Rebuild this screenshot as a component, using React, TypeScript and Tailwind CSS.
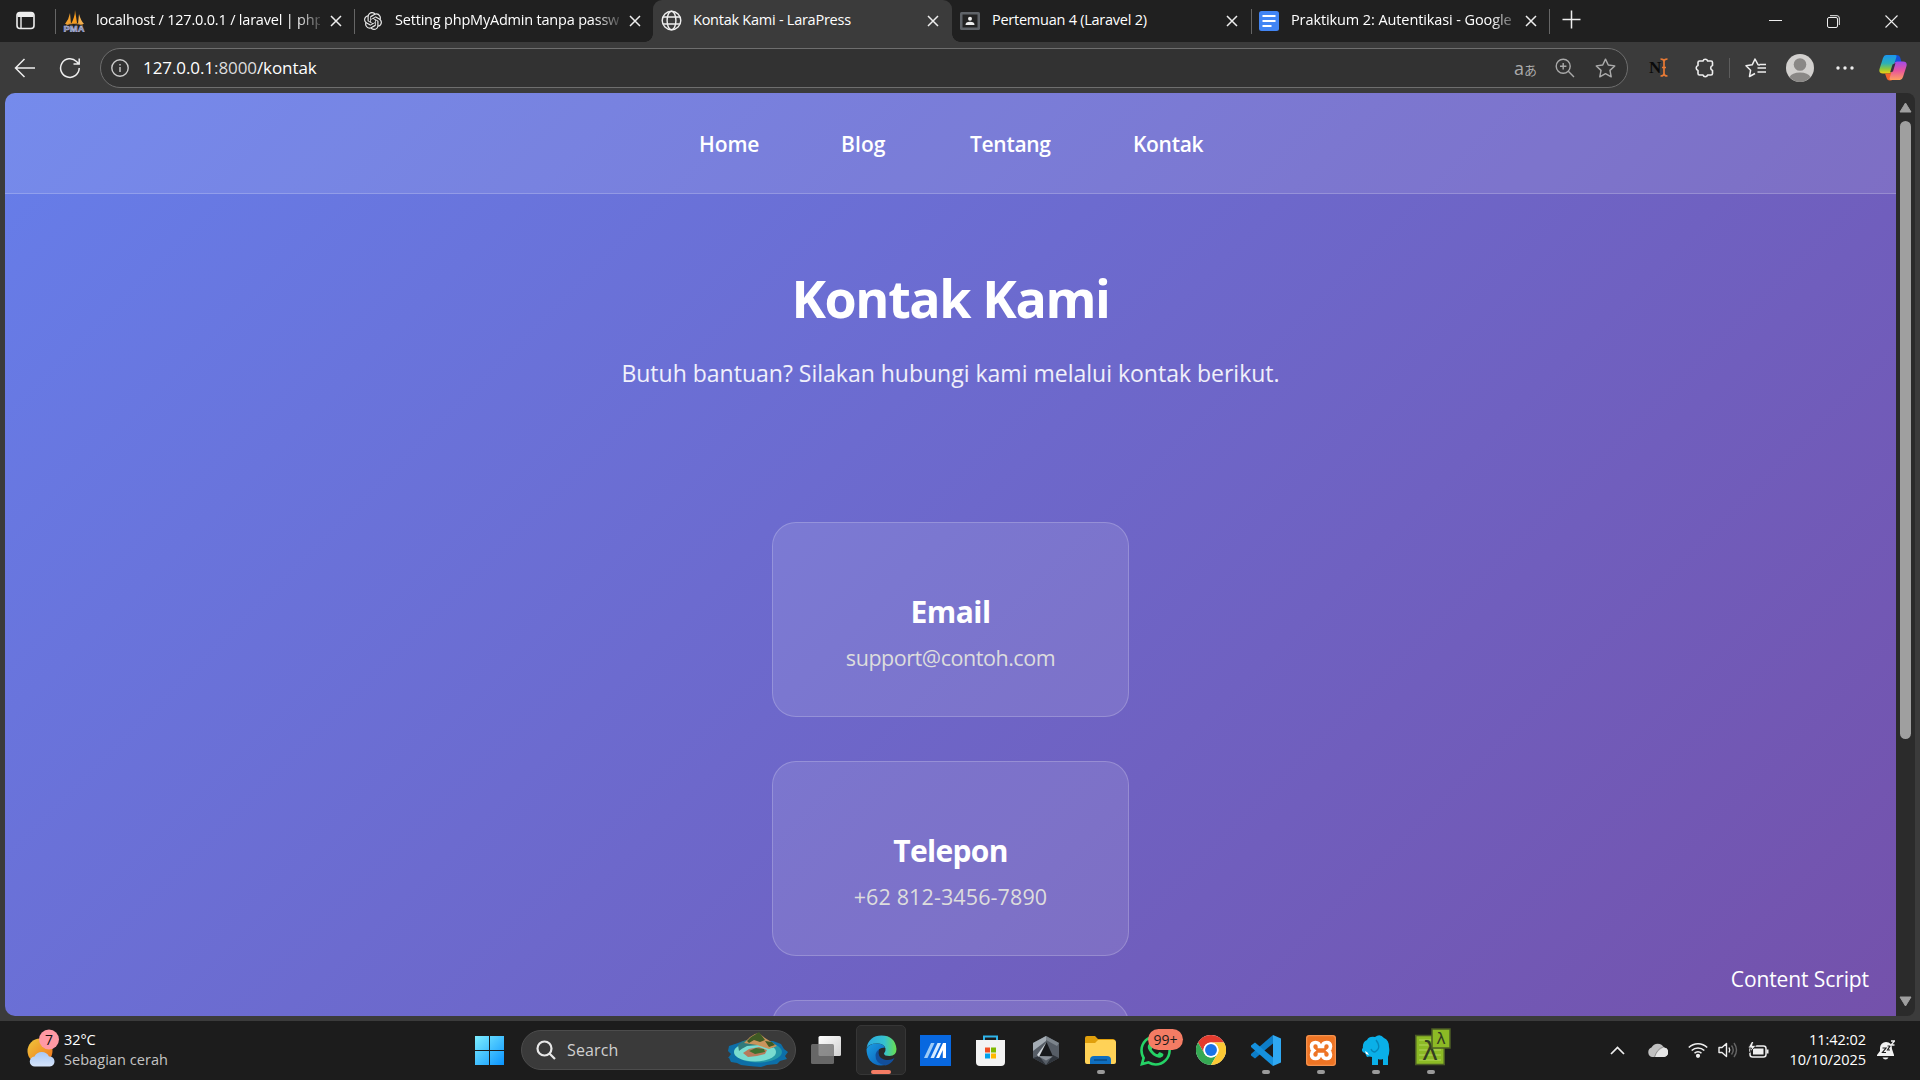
import React from "react";

const SANS = "font-['Open_Sans',sans-serif]";

function Close() {
  return (
    <svg width="12" height="12" viewBox="0 0 12 12" stroke="#eee" strokeWidth="1.5" fill="none" className="shrink-0">
      <path d="M1 1l10 10M11 1L1 11" />
    </svg>
  );
}

function Tab({ icon, text, fade = "", ls, active = false, sep = false, pad = "pl-[7px]", gap = "ml-[11px]" }: { icon: React.ReactNode; text: string; fade?: string; ls: string; active?: boolean; sep?: boolean; pad?: string; gap?: string }) {
  return (
    <div className={`relative flex h-full w-[299px] shrink-0 items-center ${pad} ${active ? "rounded-t-[9px] bg-[#3b3b3b]" : ""}`}>
      {sep && <div className="absolute left-0 top-[9px] h-[25px] w-px bg-[#666]" />}
      <div className="-mt-px flex w-[22px] shrink-0 justify-center">{icon}</div>
      <div className={`${gap} -mt-[2px] w-[224px] shrink-0 whitespace-nowrap text-[14.5px] leading-[22px] text-white ${ls} ${fade}`}>{text}</div>
      <div className="ml-[10px] flex"><Close /></div>
      {active && (
        <>
          <div className="absolute -left-[8px] bottom-0 size-[8px] bg-[radial-gradient(circle_at_0_0,#202020_7.5px,#3b3b3b_8px)]" />
          <div className="absolute -right-[8px] bottom-0 size-[8px] bg-[radial-gradient(circle_at_100%_0,#202020_7.5px,#3b3b3b_8px)]" />
        </>
      )}
    </div>
  );
}

const FADE = "[mask-image:linear-gradient(to_right,#000_200px,transparent_230px)]";

function TabBar() {
  return (
    <div className="flex h-[42px] bg-[#202020]">
      <div className="flex w-[55px] shrink-0 items-center pl-[16px]">
        <svg width="19" height="19" viewBox="0 0 19 19" fill="none" stroke="#eee" strokeWidth="1.6" className="-mt-[2px]">
          <rect x="1" y="1.5" width="17" height="16" rx="3" />
          <path d="M1.5 4h16" strokeWidth="4" />
          <path d="M5 5v12" strokeWidth="1.4" />
        </svg>
      </div>
      <Tab sep pad="pl-[8px]" text="localhost / 127.0.0.1 / laravel | php" fade={FADE} ls="tracking-[-0.2px]" icon={
        <svg width="22" height="22" viewBox="0 0 22 22">
          <path d="M2 14Q6 9 7 3L8 14z" fill="#f0a030" /><path d="M8 14Q12 7 12 0L14 13z" fill="#f89c1d" /><path d="M15 14L16 4Q18 11 21 14z" fill="#f3af4e" /><path d="M3 15Q10 12 20 15" stroke="#c9862d" fill="none" />
          <text x="0.5" y="21.5" fontSize="9" fontWeight="bold" fontFamily="Liberation Sans" fill="#5d68a4" stroke="#c6cae4" strokeWidth=".5" textLength="21" lengthAdjust="spacingAndGlyphs">PMA</text>
        </svg>} />
      <Tab sep pad="pl-[8px]" text="Setting phpMyAdmin tanpa passw" fade={FADE} ls="tracking-[-0.2px]" icon={
        <svg width="18" height="18" viewBox="0 0 24 24" fill="#e8e8e8"><path d="M22.28 9.82a5.98 5.98 0 0 0-.52-4.91 6.05 6.05 0 0 0-6.51-2.9A6.07 6.07 0 0 0 4.98 4.18a5.98 5.98 0 0 0-4 2.9 6.05 6.05 0 0 0 .74 7.1 5.98 5.98 0 0 0 .51 4.91 6.05 6.05 0 0 0 6.52 2.9A5.98 5.98 0 0 0 13.26 24a6.06 6.06 0 0 0 5.77-4.21 5.99 5.99 0 0 0 4-2.9 6.06 6.06 0 0 0-.75-7.07zm-9.02 12.61a4.48 4.48 0 0 1-2.88-1.04l.14-.08 4.78-2.76a.8.8 0 0 0 .39-.68v-6.74l2.02 1.17a.07.07 0 0 1 .04.05v5.58a4.5 4.5 0 0 1-4.49 4.5zM3.6 18.3a4.47 4.47 0 0 1-.54-3.01l.14.09 4.78 2.76a.77.77 0 0 0 .78 0l5.84-3.37v2.33a.08.08 0 0 1-.03.06L9.74 19.95a4.5 4.5 0 0 1-6.14-1.65zM2.34 7.9a4.49 4.49 0 0 1 2.37-1.98v5.68a.77.77 0 0 0 .39.68l5.81 3.35-2.02 1.17a.08.08 0 0 1-.07 0L3.99 14A4.5 4.5 0 0 1 2.34 7.87zm16.6 3.86L13.1 8.36 15.12 7.2a.08.08 0 0 1 .07 0l4.83 2.79a4.49 4.49 0 0 1-.68 8.1v-5.67a.79.79 0 0 0-.4-.67zm2.01-3.02l-.14-.09-4.77-2.78a.78.78 0 0 0-.79 0L9.41 9.23V6.9a.07.07 0 0 1 .03-.06l4.83-2.79a4.5 4.5 0 0 1 6.68 4.66zM8.31 12.86l-2.02-1.16a.08.08 0 0 1-.04-.06V6.07a4.5 4.5 0 0 1 7.38-3.45l-.14.08L8.7 5.46a.8.8 0 0 0-.39.68zm1.1-2.37L12 9l2.6 1.5v3L12 15l-2.6-1.5z" /></svg>} />
      <Tab active text="Kontak Kami - LaraPress" ls="tracking-[-0.25px]" icon={
        <svg width="21" height="21" viewBox="0 0 21 21" fill="none" stroke="#eee" strokeWidth="1.4"><circle cx="10.5" cy="10.5" r="9.3" /><ellipse cx="10.5" cy="10.5" rx="4.4" ry="9.3" /><path d="M2 7h17M2 14h17" /></svg>} />
      <Tab text="Pertemuan 4 (Laravel 2)" ls="tracking-[-0.25px]" icon={
        <svg width="20" height="18" viewBox="0 0 20 18"><rect width="20" height="18" rx="1.5" fill="#5f6368" /><rect x="2.5" y="2.5" width="15" height="13" fill="#222" /><circle cx="10" cy="6.8" r="2" fill="#eee" /><path d="M5.5 13q0-3.2 4.5-3.2t4.5 3.2z" fill="#eee" /></svg>} />
      <Tab sep text="Praktikum 2: Autentikasi - Google" fade={FADE} ls="tracking-[-0.1px]" icon={
        <svg width="20" height="20" viewBox="0 0 20 20"><rect width="20" height="20" rx="2.5" fill="#4285f4" /><path d="M3.5 5h13M3.5 10h13M3.5 15h9" stroke="#fff" strokeWidth="2" /></svg>} />
      <div className="relative flex grow items-center">
        <div className="absolute -left-px top-[9px] h-[25px] w-px bg-[#666]" />
        <svg className="-mt-[3px] ml-[12px]" width="19" height="19" viewBox="0 0 19 19" stroke="#eee" strokeWidth="1.5"><path d="M9.5 0.5v18M.5 9.5h18" /></svg>
      </div>
      <div className="flex items-center pr-[22px]">
        <svg width="13" height="13" viewBox="0 0 13 13" stroke="#eee" className="mr-[45px]"><path d="M0 5.5h13" /></svg>
        <svg width="13" height="13" viewBox="0 0 13 13" stroke="#eee" fill="none" className="mr-[45px]"><rect x=".5" y="2.5" width="10" height="10" rx="1.5" /><path d="M3 .7h7q2.3 0 2.3 2.3v7" /></svg>
        <svg width="13" height="13" viewBox="0 0 13 13" stroke="#eee" strokeWidth="1.1"><path d="M.5 .5l12 12M12.500 .5l-12 12" /></svg>
      </div>
    </div>
  );
}

function Toolbar() {
  return (
    <div className="flex h-[51px] items-center bg-[#3b3b3b]">
      <svg className="ml-[14px]" width="22" height="20" viewBox="0 0 22 20" fill="none" stroke="#eee" strokeWidth="1.5"><path d="M21 10H1.500M10.500 1L1.500 10l9 9" /></svg>
      <svg className="ml-[23px]" width="22" height="22" viewBox="0 0 22 22" fill="none" stroke="#eee" strokeWidth="1.5"><path d="M20.200 11a9.300 9.300 0 1 1-2.700-6.500L20 7M20.200 1.500V7H14.500" /></svg>
      <div className="ml-[19px] flex h-[40px] w-[1528px] items-center rounded-full border border-[#6e6e6e] bg-[#323232] pl-[10px]">
        <svg width="18" height="18" viewBox="0 0 18 18" fill="none" stroke="#ccc" strokeWidth="1.4"><circle cx="9" cy="9" r="8.200" /><path d="M9 8v5M9 5v1.600" /></svg>
        <div className="ml-[14px] grow text-[17px] leading-[24px] tracking-[-0.080px] text-[#ddd]"><span className="text-white">127.0.0.1</span>:8000<span className="text-white">/kontak</span></div>
        <div className="flex w-[22px] items-baseline whitespace-nowrap text-[18px] leading-[24px] text-[#aaa]">a<span className="font-['Noto_Sans_CJK_JP',sans-serif] text-[13px] leading-[20px]">あ</span></div>
        <svg className="ml-[19px]" width="20" height="20" viewBox="0 0 20 20" fill="none" stroke="#aaa" strokeWidth="1.400"><circle cx="8.200" cy="8.200" r="7" /><path d="M13.300 13.300l5.700 5.700M8.200 5v6.400M5 8.200h6.400" /></svg>
        <svg className="ml-[20px] mr-[11px]" width="21" height="20" viewBox="0 0 22 21" fill="none" stroke="#aaa" strokeWidth="1.500" strokeLinejoin="round"><path d="M11 1.200l2.900 6.200 6.800.900-5 4.700 1.300 6.800-6-3.400-6 3.400 1.300-6.800-5-4.700 6.800-.900z" /></svg>
      </div>
      <div className="ml-[21px] flex items-center font-['Liberation_Serif',serif] text-[17px] font-bold text-[#0a0a0a]">N
        <svg width="8" height="19" viewBox="0 0 8 19" fill="none" stroke="#e87a35" strokeWidth="1.700" className="-ml-px"><path d="M.5 1q3.500 0 3.500 2.500v12q0 2.500-3.500 2.500M7.500 1Q4 1 4 3.500M4 15.500Q4 18 7.500 18M2 9.500h4" /></svg>
      </div>
      <svg className="ml-[26px]" width="21" height="22" viewBox="0 0 21 22" fill="none" stroke="#eee" strokeWidth="1.600" strokeLinejoin="round"><path d="M5.500 4H9a2.400 2.400 0 0 1 4.600 0H17q1.500 0 1.500 1.500V8.600a2.500 2.500 0 0 0 0 4.800v3.100q0 1.500-1.500 1.500h-3.400a2.400 2.400 0 0 1-4.600 0H5.500Q4 18 4 16.500v-3.100a2.500 2.500 0 0 1 0-4.800V5.500Q4 4 5.500 4z" /></svg>
      <div className="ml-[14px] h-[20px] w-px bg-[#5d5d5d]" />
      <svg className="ml-[15px]" width="22" height="20" viewBox="0 0 22 20" fill="none" stroke="#eee" strokeWidth="1.500" strokeLinejoin="round"><path d="M15 6.900L13 6.700 10 1 7.200 6.800 1 7.700l4.600 4.500L4.500 18.500 10 15.500M12.500 10h8.500M12.500 14h8.500M14.500 6.500h6.500" /></svg>
      <svg className="ml-[19px]" width="28" height="28" viewBox="0 0 28 28"><circle cx="14" cy="14" r="14" fill="#d2d0ce" /><circle cx="14" cy="10.500" r="6.300" fill="#8a8886" /><path d="M3.500 23Q6 18.500 14 18.500T24.500 23Q20 28 14 28T3.500 23z" fill="#8a8886" /></svg>
      <svg className="ml-[22px]" width="18" height="4" viewBox="0 0 18 4" fill="#eee"><circle cx="2" cy="2" r="1.700" /><circle cx="9" cy="2" r="1.700" /><circle cx="16" cy="2" r="1.700" /></svg>
      <Copilot />
    </div>
  );
}

function Copilot() {
  return (
    <svg className="ml-[25px]" width="28" height="27" viewBox="0 0 28 27">
      <defs>
        <linearGradient id="c1" x1="0" y1="0" x2="0" y2="1"><stop offset="0" stopColor="#1a95f0" /><stop offset=".45" stopColor="#2bb0b8" /><stop offset=".75" stopColor="#8cc83c" /><stop offset="1" stopColor="#f5d010" /></linearGradient>
        <linearGradient id="c2" x1="0" y1="0" x2="0" y2="1"><stop offset="0" stopColor="#a04bea" /><stop offset=".5" stopColor="#e8559c" /><stop offset="1" stopColor="#ffa060" /></linearGradient>
      </defs>
      <path d="M14 1h4q2.500 0 3.200 2.500L22.500 8H18q-2 0-2.500 2z" fill="#1450d8" />
      <path d="M7 1h9q2 0 1.400 2L13 17q-.8 2.500-3 2.500H4Q-.5 19.500.5 15L4 4Q5 1 7 1z" fill="url(#c1)" />
      <path d="M6 19.500h4q2.200 0 3-2.500l.5-1L15 20l-2.500 6.500h-2q-2 0-2.700-2z" fill="#f4632c" />
      <path d="M21 26h-9q-2 0-1.400-2L15 10q.8-2.500 3-2.500h6q4.500 0 3.500 4.500l-3.500 11Q23 26 21 26z" fill="url(#c2)" />
      <path d="M13.500 10.500l3-1.500-2.500 8.500-3 1z" fill="#35303c" />
    </svg>
  );
}

function Card({ title, text, ts, xs }: { title: string; text: string; ts: string; xs: string }) {
  return (
    <div className="flex h-[195px] w-[357px] shrink-0 flex-col items-center rounded-[24px] border border-white/20 bg-white/10 pt-[65px]">
      <h3 className={`text-[30px] font-bold leading-[48px] text-white ${ts}`}>{title}</h3>
      <p className={`mt-[4px] text-[21.5px] leading-[36px] text-[#dddddd] ${xs}`}>{text}</p>
    </div>
  );
}

function Page() {
  return (
    <div className="relative flex h-[923px] w-[1891px] flex-col overflow-hidden rounded-bl-[10px] rounded-tl-[10px] bg-[linear-gradient(135deg,#667eea_0%,#764ba2_100%)] bg-[length:1891px_1310px] bg-no-repeat">
      <nav className="flex h-[101px] shrink-0 border-b border-white/20 bg-white/10 pl-[694px] pt-[35px] text-[21px] font-semibold leading-[32px] text-white">
        <span className="w-[142px] tracking-[-0.1px]">Home</span>
        <span className="w-[129px] tracking-[0.1px]">Blog</span>
        <span className="w-[163px] tracking-[-0.3px]">Tentang</span>
        <span className="tracking-[-0.3px]">Kontak</span>
      </nav>
      <header className="flex shrink-0 flex-col items-center pt-[64px] text-white">
        <h1 className="text-[52px] font-bold leading-[80px] tracking-[-1.4px]">Kontak Kami</h1>
        <p className="mt-[16px] text-[23px] leading-[38px] text-white/90">Butuh bantuan? Silakan hubungi kami melalui kontak berikut.</p>
      </header>
      <section className="mt-[130px] flex flex-col items-center gap-[44px]">
        <Card title="Email" text="support@contoh.com" ts="tracking-[-0.5px]" xs="tracking-[-0.45px]" />
        <Card title="Telepon" text="+62 812-3456-7890" ts="tracking-[-0.7px]" xs="tracking-[0.12px]" />
        <Card title="Alamat" text="Jakarta, Indonesia" ts="" xs="" />
      </section>
      <div className="absolute right-[27px] top-[870px] text-[21px] leading-[32px] tracking-[-0.1px] text-white">Content Script</div>
    </div>
  );
}

function Scrollbar() {
  return (
    <div className="flex h-[923px] w-[19px] flex-col items-center rounded-r-[8px] bg-[#2b2b2b]">
      <svg className="mt-[9px] shrink-0" width="13" height="11" viewBox="0 0 13 11" fill="#9f9f9f"><path d="M6.500 1L12 10H1z" stroke="#9f9f9f" strokeLinejoin="round" /></svg>
      <div className="mt-[8px] h-[618px] w-[11px] shrink-0 rounded-full bg-[#9f9f9f]" />
      <svg className="mb-[9px] mt-auto shrink-0" width="13" height="11" viewBox="0 0 13 11" fill="#9f9f9f"><path d="M1 1h11L6.500 10z" stroke="#9f9f9f" strokeLinejoin="round" /></svg>
    </div>
  );
}

function Slot({ children, dot = false }: { children: React.ReactNode; dot?: boolean }) {
  return (
    <div className="relative flex h-[50px] w-[55px] shrink-0 items-center justify-center">
      {children}
      {dot && <div className="absolute bottom-[1px] h-[4px] w-[8px] rounded-full bg-[#9a9a9a]" />}
    </div>
  );
}

function Taskbar() {
  return (
    <div className="flex h-[59px] items-center bg-[#1c1c1c] pb-px">
      <div className="flex w-[475px] shrink-0 items-center pl-[26px]">
        <svg width="34" height="38" viewBox="0 0 34 38" className="-mt-[4px]">
          <defs><linearGradient id="sun" x1="0" y1="0" x2="1" y2="1"><stop offset="0" stopColor="#f0c83c" /><stop offset="1" stopColor="#f0701a" /></linearGradient><linearGradient id="cl" x1="0" y1="0" x2="0" y2="1"><stop offset="0" stopColor="#a9c8f5" /><stop offset="1" stopColor="#d5e4fa" /></linearGradient></defs>
          <circle cx="14" cy="22" r="12.500" fill="url(#sun)" />
          <path d="M9 37.500a5 5 0 0 1-.5-10 8 8 0 0 1 14.500 0 5 5 0 0 1 1 10z" fill="url(#cl)" />
          <circle cx="23" cy="10.500" r="10" fill="#ff99a4" />
          <text x="23" y="15.500" textAnchor="middle" fontSize="14" fontFamily="Open Sans" fill="#111">7</text>
        </svg>
        <div className="ml-[4px] text-[14.500px] leading-[20px] tracking-[0.050px]">
          <div className="tracking-[-0.100px] text-white">32°C</div>
          <div className="text-[#c4c4c4]">Sebagian cerah</div>
        </div>
      </div>
      <svg width="29" height="29" viewBox="0 0 29 29" className="shrink-0"><defs><linearGradient id="win" x1="0" y1="0" x2="1" y2="1"><stop offset="0" stopColor="#7deeff" /><stop offset="1" stopColor="#0a94ff" /></linearGradient></defs><path d="M0 0h14v14H0zM15 0h14v14H15zM0 15h14v14H0zM15 15h14v14H15z" fill="url(#win)" /></svg>
      <div className="ml-[17px] flex h-[40px] w-[275px] shrink-0 items-center rounded-full border border-[#4c4c4c] bg-[#3a3a3a] pl-[14px]">
        <svg width="20" height="20" viewBox="0 0 20 20" fill="none" stroke="#e8e8e8" strokeWidth="2.200"><circle cx="8.500" cy="8.500" r="7" /><path d="M13.500 13.500l5.500 5.500" /></svg>
        <div className="ml-[11px] grow text-[16px] leading-[24px] tracking-[0.150px] text-[#d0d0d0]">Search</div>
        <svg className="-mt-[2px] mr-[6px]" width="62" height="36" viewBox="0 0 62 36">
          <path d="M2 15l9-3 5-2h30l8 3 3 5 4 3-3 4 2 3-7 2-3 3-10 1-6 2-12-1-8-1-4-2-6-1-2-4H1l3-4-3-3z" fill="#0d6fa8" />
          <ellipse cx="31" cy="21" rx="24" ry="10.500" fill="#2397a8" />
          <ellipse cx="28" cy="21" rx="21" ry="9.500" fill="#79dcd0" />
          <path d="M11 14q6-6 14-6l10 4 12 2-1 3-14-3-12 1q-6 3-8 5z" fill="#317a7a" />
          <path d="M17 12l6-6 5-3 4-1 6 5 8 5 4 3-8 3-12-4z" fill="#c9945c" />
          <path d="M20 10l4-4 5-3 3-2 3 4 3 4-5 2-6-2-5 3zM38 10l7 1 3 3-6 2z" fill="#3f5a24" />
          <path d="M16 22l6-4 10-2 8 3-2 4-8 2-9 1z" fill="#b87a5c" /><path d="M22 20l7-3 8 1 1 3-10 2z" fill="#3f7030" />
        </svg>
      </div>
      <div className="w-[2px] shrink-0" />
      <Slot><svg width="30" height="28" viewBox="0 0 30 28"><defs><linearGradient id="tv" x1="0" y1="0" x2="1" y2="1"><stop offset="0" stopColor="#fff" /><stop offset="1" stopColor="#d0d0d0" /></linearGradient></defs><rect x="7.500" width="22.500" height="20" rx="1.500" fill="url(#tv)" /><rect y="8" width="23" height="20" rx="1.500" fill="#777" opacity=".82" /></svg></Slot>
      <div className="relative ml-[3px] flex size-[50px] shrink-0 items-center justify-center rounded-[5px] border border-[#363636] bg-[#292929]">
        <svg width="31" height="31" viewBox="0 0 31 31"><defs><linearGradient id="e1"><stop offset="0" stopColor="#2aa8e0" /><stop offset=".6" stopColor="#35c1d0" /><stop offset="1" stopColor="#6ae04c" /></linearGradient><linearGradient id="e2" x1="0" y1="0" x2="1" y2="1"><stop offset="0" stopColor="#1b9de2" /><stop offset="1" stopColor="#0a5cb8" /></linearGradient></defs>
          <path d="M.5 13Q3 .5 15.500.5 29 .5 30.500 14q0 7-7 7-5.500 0-5.500-2.500 2-2 1.500-5Q18 8.500 11 8.500 3 8.500.5 13z" fill="url(#e1)" />
          <path d="M.5 14Q3 8.500 10.500 8.500q7 0 8.500 4-8 0-7.500 7 1.500 8 9.500 10-10 3.500-17-4Q.5 21 .5 14z" fill="url(#e2)" />
          <path d="M13 14.500q-2 8 5 10 6 1.500 10.500-1.500-3 6-9 7.500Q9 28.500 9.500 20q.5-4 3.500-5.500z" fill="#124f9c" />
        </svg>
        <div className="absolute bottom-[0px] h-[4px] w-[20px] rounded-full bg-[#f47c64]" />
      </div>
      <div className="w-[2px] shrink-0" />
      <Slot><svg width="31" height="31" viewBox="0 0 31 31"><rect width="31" height="31" fill="#0868e0" /><path d="M4 23L11 8h3.500L7.500 23z" fill="#9ccbf8" /><path d="M10.500 23L17.500 8H21L14 23z" fill="#d5eaff" /><path d="M16 23L23 8h3v15h-3.200v-8L19.200 23z" fill="#fff" /></svg></Slot>
      <Slot><svg width="29" height="31" viewBox="0 0 29 31"><path d="M8 6V1.500h13V6" fill="none" stroke="#2fb4ea" strokeWidth="2" /><path d="M0 5h29v22q0 4-4 4H4q-4 0-4-4z" fill="#f3f3f3" /><path d="M9 12.500h5v5H9z" fill="#f04e23" /><path d="M15 12.500h5v5h-5z" fill="#7fb900" /><path d="M9 18.500h5v5H9z" fill="#00a2ed" /><path d="M15 18.500h5v5h-5z" fill="#ffb800" /></svg></Slot>
      <Slot><svg width="28" height="29" viewBox="0 0 28 29"><path d="M14 0l13 7v15l-13 7-13-7V7z" fill="#565d66" /><path d="M14 0L1 7v8L14 5z" fill="#a4acb4" /><path d="M14 0l13 7-2 3L14 4z" fill="#7c848c" /><path d="M1 22l6-2 7 9zM27 22l-6-3-7 10z" fill="#30353c" /><path d="M14.500 6L6 20l15 .5z" fill="#17191c" /><path d="M14.500 6L5 19l2 2z" fill="#d0d5da" /><path d="M6 20l15 .5-7 4z" fill="#8b929a" /></svg></Slot>
      <Slot dot><svg width="31" height="29" viewBox="0 0 31 29"><path d="M0 2q0-2 2-2h8l3 3h15q2 0 2 2v6H0z" fill="#e09f0c" /><path d="M0 7h10l3-3h16q2 0 2 2v20q0 2-2 2H2q-2 0-2-2z" fill="#ffd257" /><path d="M5 28v-4q0-4 4-4h13q4 0 4 4v4z" fill="#0f6fc0" /><path d="M9 24h13" stroke="#0a4a85" strokeWidth="1.500" /></svg></Slot>
      <Slot>
        <svg width="31" height="31" viewBox="0 0 24 24" fill="#25d366"><path d="M17.470 14.380c-.3-.15-1.760-.87-2.030-.97-.27-.1-.47-.15-.67.15-.2.300-.77.970-.94 1.160-.17.200-.35.220-.64.080-.3-.15-1.260-.46-2.390-1.480-.88-.79-1.480-1.760-1.650-2.060-.17-.3-.02-.46.130-.61.130-.13.300-.35.450-.52.150-.17.200-.3.300-.5.100-.2.050-.37-.03-.52-.08-.15-.67-1.610-.92-2.210-.24-.58-.49-.5-.67-.51h-.57c-.2 0-.52.070-.79.370-.27.300-1.040 1.020-1.040 2.480s1.070 2.880 1.210 3.080c.15.200 2.100 3.200 5.080 4.490.71.310 1.260.49 1.690.63.710.23 1.360.2 1.870.12.570-.09 1.760-.72 2.010-1.410.25-.69.250-1.290.17-1.410-.07-.12-.27-.2-.57-.35zM12.050 21.790a9.870 9.870 0 0 1-5.030-1.380l-.36-.21-3.740.98 1-3.650-.24-.37a9.860 9.860 0 0 1-1.510-5.260C2.170 6.450 6.600 2.020 12.060 2.020a9.880 9.880 0 0 1 9.880 9.890c0 5.450-4.430 9.880-9.890 9.880zM20.460 3.490A11.820 11.820 0 0 0 12.050 0C5.500 0 .16 5.340.16 11.890c0 2.100.55 4.140 1.590 5.950L.06 24l6.300-1.650a11.880 11.880 0 0 0 5.690 1.450c6.550 0 11.890-5.340 11.890-11.890a11.820 11.820 0 0 0-3.480-8.420z" /></svg>
        <div className="absolute left-[20px] top-[4px] flex h-[21px] w-[35px] items-center justify-center rounded-full bg-[#f47c64] text-[14px] text-[#1a1a1a]">99+</div>
      </Slot>
      <Slot><svg width="30" height="30" viewBox="0 0 48 48"><circle cx="24" cy="24" r="24" fill="#fff" /><path d="M24 0a24 24 0 0 1 20.800 12H24A12 12 0 0 0 13.600 30L3.200 12A24 24 0 0 1 24 0z" fill="#e33b2e" /><path d="M3.200 12A24 24 0 0 0 24 48L34.400 30A12 12 0 0 1 13.600 30z" fill="#35a853" /><path d="M44.800 12A24 24 0 0 1 24 48L34.400 30A12 12 0 0 0 34.400 18 12 12 0 0 0 24 12z" fill="#fcc934" /><circle cx="24" cy="24" r="12" fill="#fff" /><circle cx="24" cy="24" r="9.500" fill="#1a73e8" /></svg></Slot>
      <Slot dot><svg width="30" height="31" viewBox="0 0 30 31"><path d="M22 0v8.500L4 23.500l-4-3V19z" fill="#0d7dc8" /><path d="M22 31v-8.500L4 7.500l-4 3V12z" fill="#1590dd" /><path d="M22 0l8 3.500v24L22 31z" fill="#2fa8f2" /></svg></Slot>
      <Slot dot><svg width="30" height="31" viewBox="0 0 30 31"><rect width="30" height="31" rx="3" fill="#ee7424" /><rect x=".7" y=".7" width="28.600" height="29.600" rx="2.500" fill="none" stroke="#f39a5c" /><path d="M9.500 7.500q4 0 4 4h3q0-4 4-4t4 4q0 2.500-2 4 2 1.500 2 4 0 4-4 4t-4-4h-3q0 4-4 4t-4-4q0-2.500 2-4-2-1.500-2-4 0-4 4-4z" fill="none" stroke="#fff" strokeWidth="3.600" /></svg></Slot>
      <Slot dot><svg width="28" height="31" viewBox="0 0 28 31"><path d="M1 14Q0 7 5 5q2-4 8-3 5-4 9 1 5 2 5 9 1 5-1 10v8h-5v-6q-3 1-5 0v6h-6v-8q-3-1-5 0l-2-4q-4-1-3-5z" fill="#0ab0e8" /><path d="M14 5q6 8-1 12-3 0-4-3" stroke="#0785b8" fill="none" strokeWidth="1.300" /><path d="M3 16q3 1 4 4l-3-1z" fill="#fff" /></svg></Slot>
      <Slot dot>
        <svg width="37" height="38" viewBox="0 0 37 38" className="-mt-[6px] ml-[6px] shrink-0"><rect x=".75" y="7.500" width="28.500" height="29" fill="#8cba25" stroke="#4b5c25" strokeWidth="1.500" /><path d="M4 12h22M4 17h22M4 22h22M4 27h22M4 32h22" stroke="#b2d65c" /><text x="15" y="32" fontSize="27" textAnchor="middle" fontFamily="DejaVu Sans" fill="#333c22">λ</text><rect x="17" y="1" width="18" height="19" fill="#8cba25" stroke="#4b5c25" strokeWidth="1.500" /><text x="26" y="16" fontSize="16" textAnchor="middle" fontFamily="DejaVu Sans" fill="#333c22">λ</text></svg>
      </Slot>
      <div className="ml-auto flex items-center pr-[25px]">
        <svg width="15" height="9" viewBox="0 0 15 9" fill="none" stroke="#eee" strokeWidth="1.700"><path d="M1 8l6.500-6.500L14 8" /></svg>
        <svg className="ml-[22px]" width="21" height="14" viewBox="0 0 21 14"><path d="M5 14a5 5 0 0 1-.5-9.500A7 7 0 0 1 17 4.500 4.800 4.800 0 0 1 17 14z" fill="#c0c0c0" /><path d="M8 14Q11 6 17 4.500A4.800 4.800 0 0 1 17 14z" fill="#e6e6e6" /><path d="M7.500 14Q10 6 16 4" fill="none" stroke="#888" strokeWidth=".8" /></svg>
        <svg className="ml-[20px]" width="20" height="16" viewBox="0 0 20 16" fill="none" stroke="#eee" strokeWidth="1.600"><path d="M.8 5.500a13 13 0 0 1 18.400 0M3.700 8.500a9 9 0 0 1 12.600 0M6.500 11.300a5 5 0 0 1 7 0" /><circle cx="10" cy="13.800" r="1.300" fill="#eee" /></svg>
        <svg className="ml-[10px]" width="20" height="16" viewBox="0 0 20 16" fill="none" stroke="#eee" strokeWidth="1.400"><path d="M1 5.500h3L8.500 1.500v13L4 10.500H1z" strokeLinejoin="round" /><path d="M11 5.500q1.500 2.500 0 5" /><path d="M13.500 3.500q3.500 4.500 0 9M16 1q5 7 0 14" stroke="#666" /></svg>
        <svg className="ml-[10px]" width="21" height="16" viewBox="0 0 21 16" fill="none" stroke="#eee" strokeWidth="1.500"><rect x="2" y="4" width="16" height="11" rx="2.500" /><rect x="5" y="6.500" width="10.500" height="6" fill="#eee" stroke="none" /><path d="M19.500 7.500v4" strokeWidth="2" /><path d="M4-1L0 6h3.500L1.500 11 8 3.500H4.500L6-1z" fill="#eee" stroke="#1c1c1c" strokeWidth=".8" /></svg>
        <div className="ml-[13px] w-[84px] text-right text-[14.500px] leading-[20px] tracking-[-0.050px] text-white"><div>11:42:02</div><div>10/10/2025</div></div>
        <svg className="ml-[11px]" width="18" height="20" viewBox="0 0 18 20"><path d="M3 8a6 6 0 0 1 6-6q6 0 6 7l2 6v1H0v-1l3-4z" fill="#f2f2f2" /><path d="M5.500 17.500h6q-1 2-3 2t-3-2z" fill="#f2f2f2" /><path d="M5.500 8H9L5.500 12.500H9M10.500 6H13L10.500 10H13" stroke="#1c1c1c" fill="none" strokeWidth="1.200" /><path d="M14 1h3.500L14 5h3.500" stroke="#f2f2f2" fill="none" strokeWidth="1.300" /></svg>
      </div>
    </div>
  );
}

export default function App() {
  return (
    <div className={`flex h-[1080px] w-[1920px] flex-col overflow-hidden bg-[#3b3b3b] ${SANS}`}>
      <TabBar />
      <Toolbar />
      <div className="flex h-[928px] pl-[5px]">
        <Page />
        <Scrollbar />
      </div>
      <Taskbar />
    </div>
  );
}
